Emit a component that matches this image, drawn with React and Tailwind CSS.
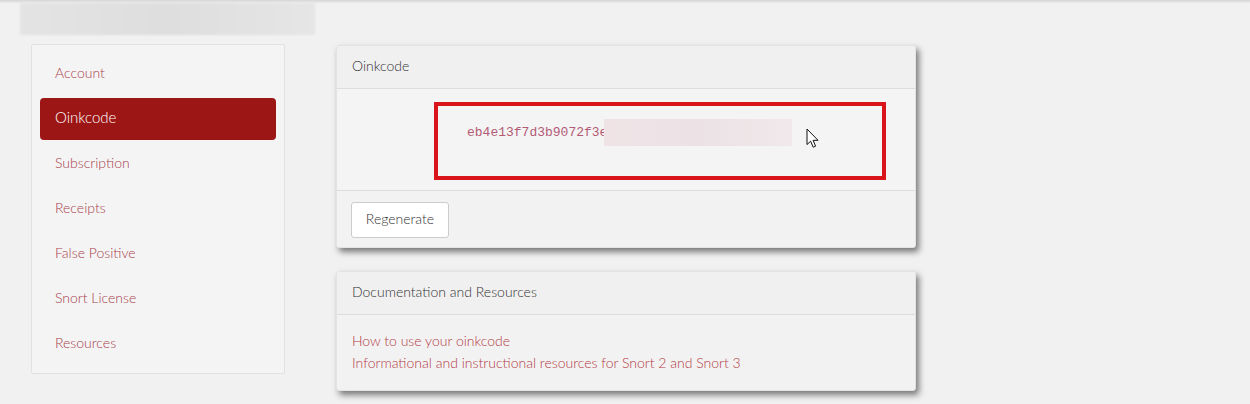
import React from "react";

const items = ["Account", "Oinkcode", "Subscription", "Receipts", "False Positive", "Snort License", "Resources"];

function Cursor() {
  return (
    <svg width="14" height="21" viewBox="0 0 14 21" className="block">
      <path
        d="M1 1 L1 16.5 L4.6 13.2 L7.2 19.2 L9.6 18.2 L7.1 12.3 L12 12.3 Z"
        fill="#ffffff"
        stroke="#111111"
        strokeWidth="1"
        strokeLinejoin="round"
      />
    </svg>
  );
}

export default function App() {
  return (
    <div
      className="w-[1250px] h-[404px] bg-[#f1f1f1] overflow-hidden text-[14px] font-light"
      style={{ fontFamily: "Lato, 'Open Sans', sans-serif" }}
    >
      <div className="h-[3px] bg-gradient-to-b from-[#d6d6d6] to-[#ebebeb]" />
      <div className="ml-[20px] w-[295px] h-[32px] bg-gradient-to-r from-[#e4e4e4] via-[#dedede] to-[#e6e6e6] blur-[1px]" />
      <div className="flex mt-[9px]">
        {/* Sidebar */}
        <div className="ml-[31px] w-[254px] h-[330px] bg-[#f4f4f4] border border-[#e1e1e1] rounded-[2px] p-[8px] flex flex-col gap-[3px]">
          {items.map((it) => (
            <div
              key={it}
              className={
                it === "Oinkcode"
                  ? "h-[42px] flex items-center pl-[15px] pb-[3px] rounded-[4px] bg-[#9d1616] text-white text-[15px]"
                  : "h-[42px] flex items-center pl-[15px] pb-[4px] text-[#a8404c] text-[14px]"
              }
            >
              {it}
            </div>
          ))}
        </div>

        {/* Main */}
        <div className="ml-[51px] w-[580px] flex flex-col mt-[1px]">
          <div className="bg-[#f2f2f2] border border-[#e3e3e3] rounded-[3px] shadow-[3px_4px_6px_rgba(0,0,0,0.5)]">
            <div className="h-[43px] flex items-center px-[15px] pb-[3px] text-[#333333] border-b border-[#dddddd] bg-[#f0f0f0]">
              Oinkcode
            </div>
            <div className="h-[101px] pt-[13px] pl-[97px] bg-[#f4f4f4]">
              <div className="w-[452px] h-[78px] border-[4px] border-[#d9151b] pl-[29px] pt-[13px] flex items-start">
                <span
                  className="text-[13px] leading-[27px] text-[#b35a74] font-normal"
                  style={{ fontFamily: "'Liberation Mono', 'DejaVu Sans Mono', monospace" }}
                >
                  eb4e13f7d3b9072f3e
                </span>
                <div className="ml-[-3px] w-[188px] h-[27px] bg-gradient-to-r from-[#efe3e6] via-[#ece2e5] to-[#f0e8ea]" />
                <div className="ml-[14px] mt-[9px]">
                  <Cursor />
                </div>
              </div>
            </div>
            <div className="h-[57px] border-t border-[#dddddd] px-[14px] pt-[11px]">
              <button className="h-[36px] w-[98px] pb-[3px] bg-white border border-[#cccccc] rounded-[3px] text-[#333333] text-[14px] font-light">
                Regenerate
              </button>
            </div>
          </div>

          <div className="mt-[23px] bg-[#f2f2f2] border border-[#e3e3e3] rounded-[3px] shadow-[3px_4px_6px_rgba(0,0,0,0.5)]">
            <div className="h-[43px] flex items-center px-[15px] pb-[3px] text-[#333333] border-b border-[#dddddd] bg-[#f0f0f0]">
              Documentation and Resources
            </div>
            <div className="px-[15px] pt-[15px] pb-[16px] text-[#b23a44] leading-[22px]">
              <div>How to use your oinkcode</div>
              <div>Informational and instructional resources for Snort 2 and Snort 3</div>
            </div>
          </div>
        </div>
      </div>
    </div>
  );
}
